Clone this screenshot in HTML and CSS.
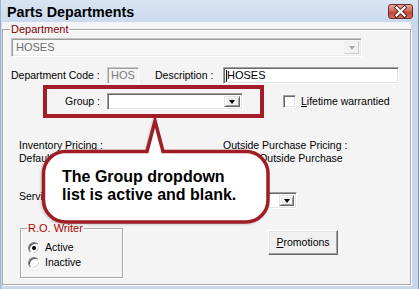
FILE: index.html
```html
<!DOCTYPE html>
<html>
<head>
<meta charset="utf-8">
<link rel="stylesheet" href="styles.css">
</head>
<body>
<div class="window">
  <header class="titlebar">
    <span class="title">Parts Departments</span>
    <span class="close">
      <svg width="23" height="13" viewBox="0 0 23 13">
        <path d="M7.5 2.5 L15.5 10.5 M15.5 2.5 L7.5 10.5" stroke="#5a2420" stroke-width="4" stroke-linecap="square"/>
        <path d="M7.5 2.5 L15.5 10.5 M15.5 2.5 L7.5 10.5" stroke="#ffffff" stroke-width="2.2" stroke-linecap="square"/>
      </svg>
    </span>
  </header>
  <div class="client">
    <section class="group dept">
      <span class="legend">Department</span>
      <div class="combo dept-combo disabled"><span class="val">HOSES</span><span class="dd"><i class="arrow"></i></span></div>
      <div class="row codes">
        <span class="lbl code-lbl">Department Code :</span>
        <span class="field code disabled">HOS</span>
        <span class="lbl desc-lbl">Description :</span>
        <span class="field desc"><i class="caret"></i>HOSES</span>
      </div>
      <div class="row grp">
        <span class="lbl grp-lbl">Group :</span>
        <div class="combo grp-combo"><span class="val"></span><span class="dd"><i class="arrow"></i></span></div>
        <span class="check"></span>
        <span class="lbl check-lbl"><u>L</u>ifetime warrantied</span>
      </div>
      <div class="row pricing">
        <div class="col pleft"><div>Inventory Pricing :</div><div>Default List</div></div>
        <div class="col pright"><div>Outside Purchase Pricing :</div><div>Default Outside Purchase</div></div>
      </div>
      <div class="row service">
        <span class="lbl svc-lbl">Service</span>
        <div class="combo svc-combo"><span class="val"></span><span class="dd"><i class="arrow"></i></span></div>
      </div>
      <div class="row bottom">
        <div class="group ro">
          <span class="legend">R.O. Writer</span>
          <div class="radio"><span class="dot on"></span>Active</div>
          <div class="radio"><span class="dot"></span>Inactive</div>
        </div>
        <div class="btn"><u>P</u>romotions</div>
      </div>
    </section>
  </div>
  <div class="highlight"></div>
  <div class="callout">
    <svg class="bubble" width="419" height="289" viewBox="0 0 419 289">
      <path d="M65.5 151.5 L147 151.5 L155 121 L163 151.5 L246 151.5 A22 22 0 0 1 268 173.5 L268 200 A22 22 0 0 1 246 222 L65.5 222 A22 22 0 0 1 43.5 200 L43.5 173.5 A22 22 0 0 1 65.5 151.5 Z" fill="#ffffff" stroke="#a01d25" stroke-width="3.5" stroke-linejoin="miter"/>
    </svg>
    <p class="callout-text">The Group dropdown<br>list is active and blank.</p>
  </div>
</div>
</body>
</html>
```

FILE: styles.css
```css
* { box-sizing: border-box; }
html, body { margin: 0; padding: 0; }
body {
  width: 419px;
  height: 289px;
  overflow: hidden;
  font-family: "Liberation Sans", Arial, sans-serif;
  font-size: 10.5px;
  line-height: 13px;
  color: #000;
}
.window {
  position: relative;
  width: 419px;
  height: 289px;
  background: #c8d7eb;
  border-left: 1px solid #9fb3cc;
  border-right: 1px solid #7f95b2;
  display: flex;
  flex-direction: column;
}
.titlebar {
  height: 22px;
  flex: none;
  display: flex;
  justify-content: space-between;
  align-items: flex-start;
  padding: 0 5px 0 6px;
  background: linear-gradient(#d9e4f2, #cadaee);
}
.title {
  font-size: 14.3px;
  font-weight: bold;
  line-height: 16px;
  margin-top: 4px;
}
.close {
  margin-top: 4px;
  width: 25px;
  height: 15px;
  border: 1px solid #6e2d29;
  border-radius: 3px;
  background: linear-gradient(#e7a99c, #d06a5b 45%, #c3473a 55%, #cf6a55);
  display: flex;
  align-items: center;
  justify-content: center;
}
.close svg { display: block; }
.client {
  flex: none;
  margin: 0 7px 0 1px;
  height: 263px;
  background: #f4f4f4;
  padding-top: 7px;
}
.group {
  position: relative;
  border: 1px solid #a9a9a9;
  box-shadow: inset 1px 1px 0 #fff, 1px 1px 0 #fff;
}
.dept {
  height: 256px;
  display: flex;
  flex-direction: column;
}
.legend {
  position: absolute;
  top: -7px;
  left: 7px;
  padding: 0 1px;
  background: #f4f4f4;
  color: #800000;
  line-height: 13px;
  font-size: 11px;
}
.row {
  display: flex;
  align-items: center;
}
.combo {
  display: flex;
  align-items: center;
  background: #fff;
  border: 1px solid;
  border-color: #a0a0a0 #fff #fff #a0a0a0;
  box-shadow: inset 1px 1px 0 #696969, inset -1px -1px 0 #e3e3e3;
  padding: 2px;
}
.combo .val { flex: 1; padding-left: 2px; }
.combo .dd {
  width: 15px;
  align-self: stretch;
  background: #f0f0f0;
  border: 1px solid;
  border-color: #e3e3e3 #696969 #696969 #e3e3e3;
  box-shadow: inset 1px 1px 0 #fff, inset -1px -1px 0 #a0a0a0;
  display: flex;
  align-items: center;
  justify-content: center;
}
.arrow {
  display: block;
  width: 0;
  height: 0;
  border-left: 3.5px solid transparent;
  border-right: 3.5px solid transparent;
  border-top: 4px solid #000;
  margin-top: 1px;
}
.dept-combo {
  margin: 8px 0 0 8px;
  width: 351px;
  height: 19px;
  background: #f7f7f7;
  border-color: #c2c2c2 #fff #fff #c2c2c2;
  box-shadow: inset 1px 1px 0 #9a9a9a, inset -1px -1px 0 #ececec;
  color: #6d6d6d;
  font-size: 11px;
}
.dept-combo .val { padding-left: 2px; }
.dept-combo .dd {
  border-color: #f0f0f0 #c8c8c8 #c8c8c8 #f0f0f0;
  box-shadow: none;
  background: #f2f2f2;
}
.dept-combo .arrow { border-top-color: #a8a8a8; }

.codes { margin-top: 10px; height: 17px; }
.code-lbl { margin-left: 8px; width: 96px; }
.field {
  height: 17px;
  border: 1px solid;
  border-color: #a0a0a0 #fff #fff #a0a0a0;
  box-shadow: inset 1px 1px 0 #696969, inset -1px -1px 0 #e3e3e3;
  padding: 2px 3px;
  background: #fff;
  display: flex;
  align-items: center;
  font-size: 11px;
}
.field.code {
  width: 32px;
  background: #f4f4f4;
  color: #7a7a7a;
  border-color: #c8c8c8 #fff #fff #c8c8c8;
  box-shadow: inset 1px 1px 0 #a0a0a0;
}
.desc-lbl { margin-left: 16px; width: 68px; }
.field.desc { width: 176px; padding-left: 2px; }
.caret {
  display: block;
  width: 1px;
  height: 12px;
  background: #000;
}

.grp { margin-top: 9px; height: 17px; }
.grp-lbl { margin-left: 8px; width: 89px; text-align: right; margin-right: 7px; }
.grp-combo { width: 136px; height: 17px; }
.grp-combo .dd { width: 16px; }
.check {
  margin-left: 40px;
  width: 13px;
  height: 13px;
  background: #fff;
  border: 1px solid;
  border-color: #a0a0a0 #fff #fff #a0a0a0;
  box-shadow: inset 1px 1px 0 #696969, inset -1px -1px 0 #e3e3e3;
}
.check-lbl { margin-left: 5px; }

.pricing { margin-top: 29px; align-items: flex-start; }
.pleft { margin-left: 16px; width: 204px; }

.service { margin-top: 27px; height: 17px; align-items: flex-start; }
.svc-lbl { margin-left: 16px; width: 88px; margin-top: -2px; }
.svc-combo { width: 190px; height: 17px; }
.svc-combo .dd { width: 15px; }

.bottom { margin-top: 19px; align-items: flex-start; }
.ro {
  margin-left: 17px;
  width: 103px;
  height: 50px;
  padding: 11px 0 0 7px;
}
.ro .legend { left: 6px; color: #b00000; }
.radio {
  display: flex;
  align-items: center;
  height: 15px;
}
.dot {
  width: 12px;
  height: 12px;
  border-radius: 50%;
  background: #fff;
  border: 1px solid;
  border-color: #808080 #fff #fff #808080;
  box-shadow: inset 1px 1px 0 #505050, inset -1px -1px 0 #d4d4d4;
  margin-right: 5px;
  display: flex;
  align-items: center;
  justify-content: center;
}
.dot.on::after {
  content: "";
  width: 4px;
  height: 4px;
  border-radius: 50%;
  background: #000;
}
.btn {
  margin: 2px 0 0 145px;
  width: 70px;
  height: 25px;
  background: #f0f0f0;
  border: 1px solid;
  border-color: #fff #696969 #696969 #fff;
  box-shadow: inset -1px -1px 0 #a0a0a0, inset 1px 1px 0 #e3e3e3;
  display: flex;
  align-items: center;
  justify-content: center;
}

.highlight {
  position: absolute;
  left: 42px;
  top: 85px;
  width: 221px;
  height: 33px;
  border: 4px solid #a41d26;
}
.callout {
  position: absolute;
  left: -1px;
  top: 0;
  width: 419px;
  height: 289px;
  pointer-events: none;
}
.bubble {
  position: absolute;
  left: 0;
  top: 0;
  filter: drop-shadow(-1px 1px 1px rgba(0,0,0,0.18));
}
.callout-text {
  position: absolute;
  left: 62px;
  top: 168px;
  margin: 0;
  font-size: 16px;
  font-weight: bold;
  line-height: 18px;
  color: #000;
}
```
